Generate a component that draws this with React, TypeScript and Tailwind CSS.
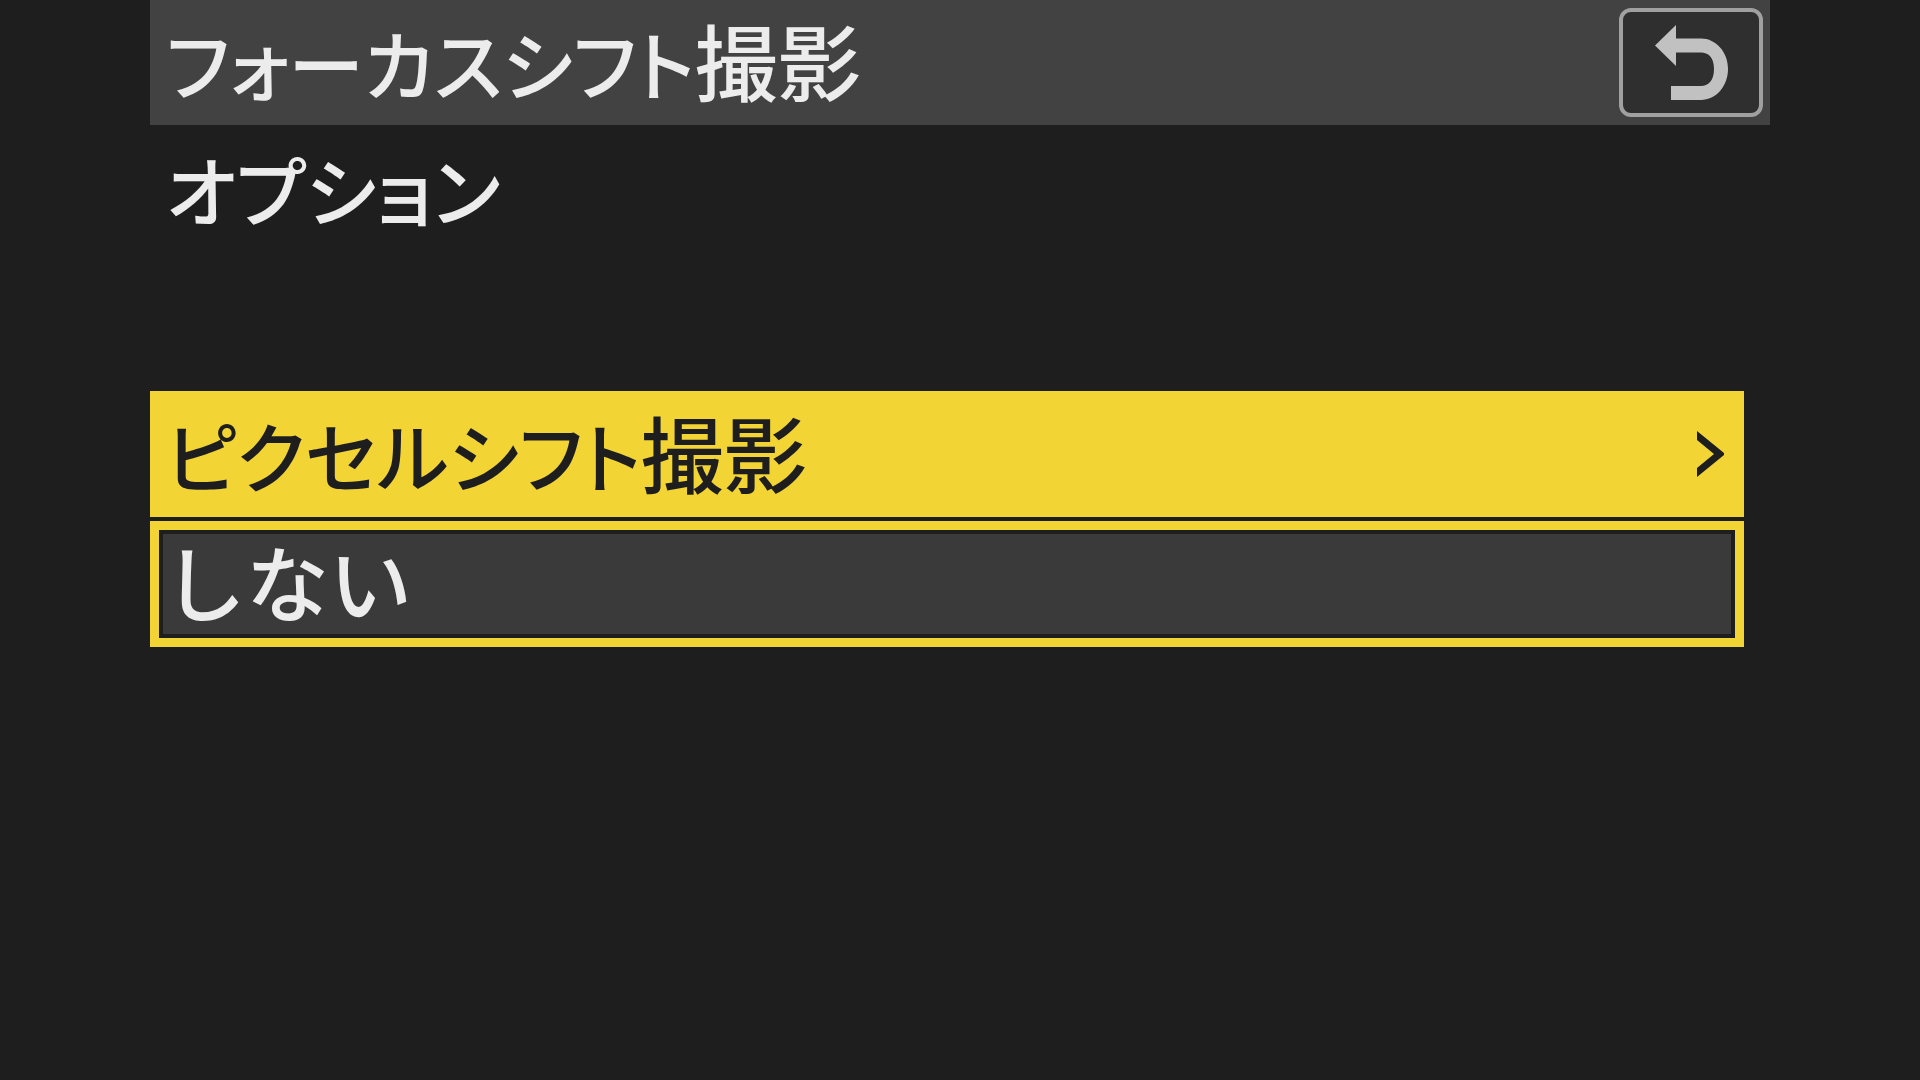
import { useState } from "react";

interface MixedLabel {
  kana: string;
  kanji?: string;
}

interface MenuOption {
  id: string;
  label: MixedLabel;
  hasSubmenu: boolean;
}

const options: MenuOption[] = [
  { id: "pixel-shift", label: { kana: "ピクセルシフト", kanji: "撮影" }, hasSubmenu: true },
];

// Katakana is set smaller and proportional, kanji at full size
function Label({ kana, kanji }: MixedLabel) {
  return (
    <span className="text-[76px] [font-feature-settings:'palt']">
      {kana}
      {kanji && <span className="text-[83px]">{kanji}</span>}
    </span>
  );
}

function BackIcon() {
  return (
    <svg viewBox="0 0 73 76" className="w-[73px] h-[76px]" fill="#c1c1c1" aria-hidden="true">
      <path d="M0 20.5 21 0V13.5H46C61 13.5 73 27 73 44S61 75 46 75H16V61H46C53 61 59 56 59 44S53 27.5 46 27.5H21V41Z" />
    </svg>
  );
}

function ChevronIcon() {
  return (
    <svg viewBox="0 0 27 46" className="w-[27px] h-[46px] shrink-0" fill="#1e1e1e" aria-hidden="true">
      <path d="M0 0 27 22V24L0 46V37L17 23 0 9Z" />
    </svg>
  );
}

function Header({ onBack }: { onBack: () => void }) {
  return (
    <header className="flex items-center justify-between h-[125px] pl-4 pr-[7px] bg-[#424242]">
      <h1 className="pb-1">
        <Label kana="フォーカスシフト" kanji="撮影" />
      </h1>
      <button
        type="button"
        onClick={onBack}
        aria-label="戻る"
        className="flex items-center justify-center w-[144px] h-[109px] rounded-xl border-4 border-[#a0a0a0] bg-[#2f2f2f]"
      >
        <BackIcon />
      </button>
    </header>
  );
}

export default function App() {
  const [enabled, setEnabled] = useState(false);

  return (
    <main
      lang="ja"
      className="min-h-screen px-[150px] bg-[#1e1e1e] text-[#ececec] text-[83px] leading-[120px] font-medium whitespace-nowrap font-['Noto_Sans_CJK_JP',sans-serif]"
    >
      <Header onBack={() => setEnabled(false)} />
      <h2 className="h-[266px] pl-4">
        <Label kana="オプション" />
      </h2>

      <div className="flex flex-col gap-1 mr-[26px]">
        {options.map((option) => (
          <button
            key={option.id}
            type="button"
            className="flex items-center justify-between h-[126px] pl-4 pr-5 bg-[#f2d535] text-[#1e1e1e]"
          >
            <span className="pb-1">
              <Label {...option.label} />
            </span>
            {option.hasSubmenu && <ChevronIcon />}
          </button>
        ))}
        <button
          type="button"
          aria-pressed={enabled}
          onClick={() => setEnabled(!enabled)}
          className="h-[126px] p-[9px] bg-[#f2d535] text-left"
        >
          <span className="flex items-center h-full pb-2 border-4 border-[#1e1e1e] bg-[#3a3a3a]">
            {enabled ? "する" : "しない"}
          </span>
        </button>
      </div>
    </main>
  );
}
